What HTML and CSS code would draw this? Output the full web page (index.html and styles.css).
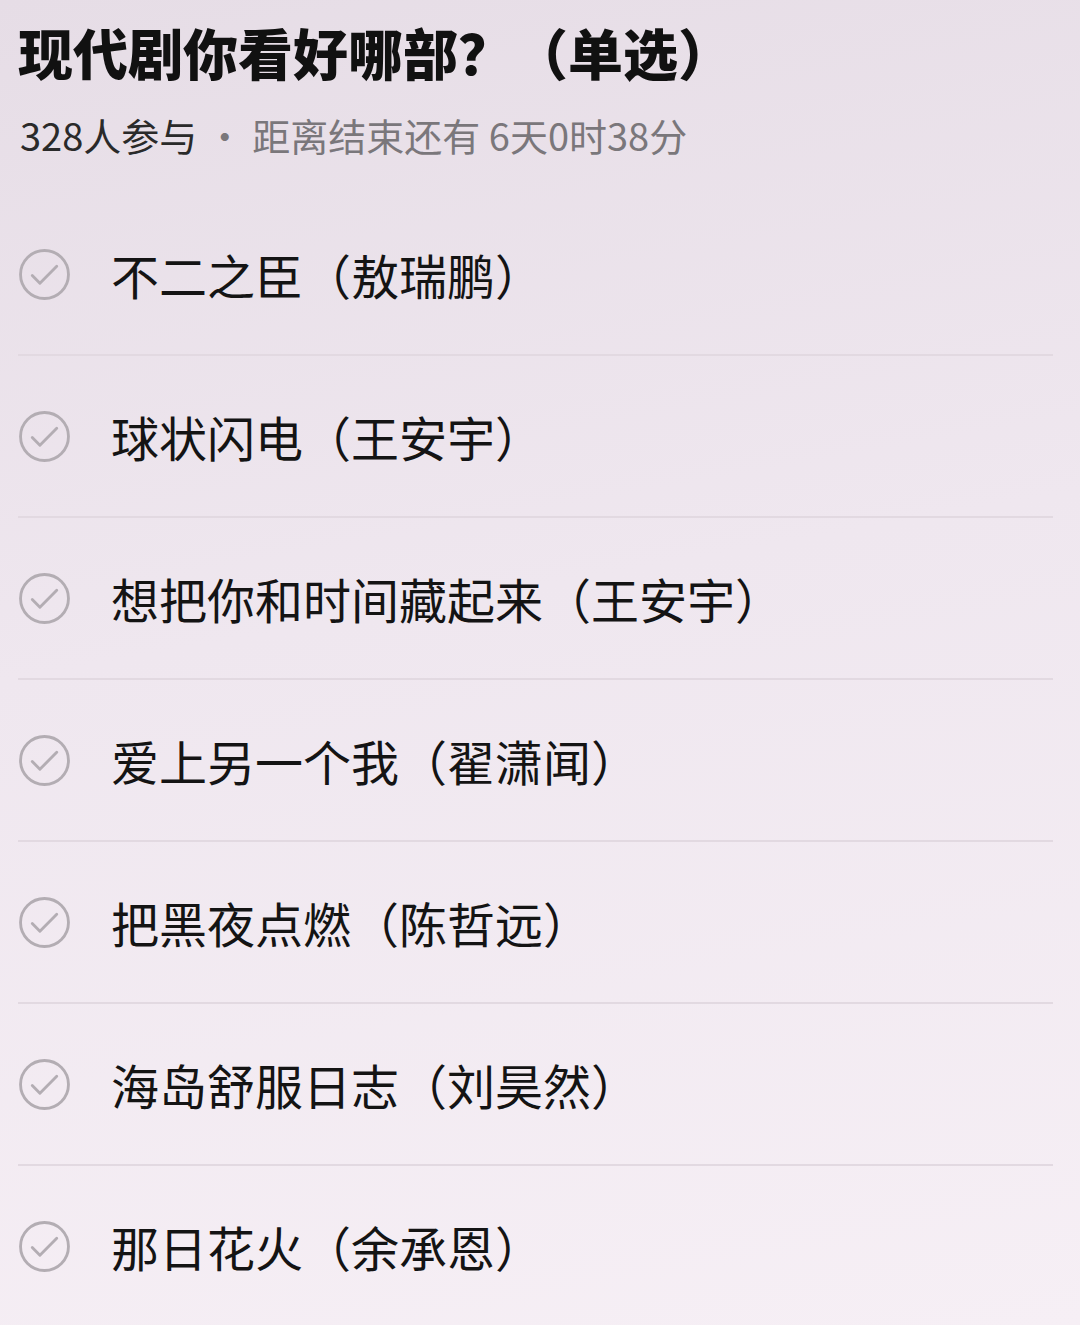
FILE: index.html
```html
<!DOCTYPE html>
<html lang="zh-CN">
<head>
	<title>投票</title>
	<meta charset="utf-8" />
	<link rel="stylesheet" href="styles.css">
</head>
<body>
<section class="poll">
	<h1 class="title">现代剧你看好哪部？（单选）</h1>
	<p class="meta"><span class="count">328人参与</span> · 距离结束还有 6天0时38分</p>
	<ul class="options">
		<li><svg class="check" viewBox="0 0 50 50"><circle cx="25" cy="25" r="23.5"/><path d="M13 26 L20.5 33.5 L37 17"/></svg><span>不二之臣（敖瑞鹏）</span></li>
		<li><svg class="check" viewBox="0 0 50 50"><circle cx="25" cy="25" r="23.5"/><path d="M13 26 L20.5 33.5 L37 17"/></svg><span>球状闪电（王安宇）</span></li>
		<li><svg class="check" viewBox="0 0 50 50"><circle cx="25" cy="25" r="23.5"/><path d="M13 26 L20.5 33.5 L37 17"/></svg><span>想把你和时间藏起来（王安宇）</span></li>
		<li><svg class="check" viewBox="0 0 50 50"><circle cx="25" cy="25" r="23.5"/><path d="M13 26 L20.5 33.5 L37 17"/></svg><span>爱上另一个我（翟潇闻）</span></li>
		<li><svg class="check" viewBox="0 0 50 50"><circle cx="25" cy="25" r="23.5"/><path d="M13 26 L20.5 33.5 L37 17"/></svg><span>把黑夜点燃（陈哲远）</span></li>
		<li><svg class="check" viewBox="0 0 50 50"><circle cx="25" cy="25" r="23.5"/><path d="M13 26 L20.5 33.5 L37 17"/></svg><span>海岛舒服日志（刘昊然）</span></li>
		<li><svg class="check" viewBox="0 0 50 50"><circle cx="25" cy="25" r="23.5"/><path d="M13 26 L20.5 33.5 L37 17"/></svg><span>那日花火（余承恩）</span></li>
	</ul>
</section>
</body>
</html>
```

FILE: styles.css
```css
html, body {
	height: 100%;
}
body {
	margin: 0;
	padding: 0;
	font-family: "Noto Sans CJK SC", "Noto Sans", sans-serif;
	color: #141414;
	background: linear-gradient(170deg, #e6dde6 0%, #efe7ef 45%, #f6eff5 100%);
	overflow: hidden;
}
.poll {
	padding: 0 27px 0 18px;
}
.title {
	margin: 0;
	padding-top: 18px;
	font-size: 55px;
	line-height: 66px;
	font-weight: 900;
	color: #111;
}
.meta {
	margin: 28px 0 0 2px;
	font-size: 38px;
	line-height: 46px;
	color: #7a777b;
}
.meta .count {
	color: #2a2a2a;
}
.options {
	list-style: none;
	margin: 36px 0 0;
	padding: 0;
}
.options li {
	display: flex;
	align-items: center;
	gap: 41px;
	height: 160px;
	border-bottom: 2px solid #e2d9e1;
	font-size: 48px;
	line-height: 1;
}
.options li:last-child {
	border-bottom: none;
}
.check {
	width: 51px;
	height: 51px;
	flex: none;
	margin-left: 1px;
	fill: none;
	stroke: #b3adb3;
	stroke-width: 2.8;
	stroke-linecap: round;
	stroke-linejoin: round;
}
```
